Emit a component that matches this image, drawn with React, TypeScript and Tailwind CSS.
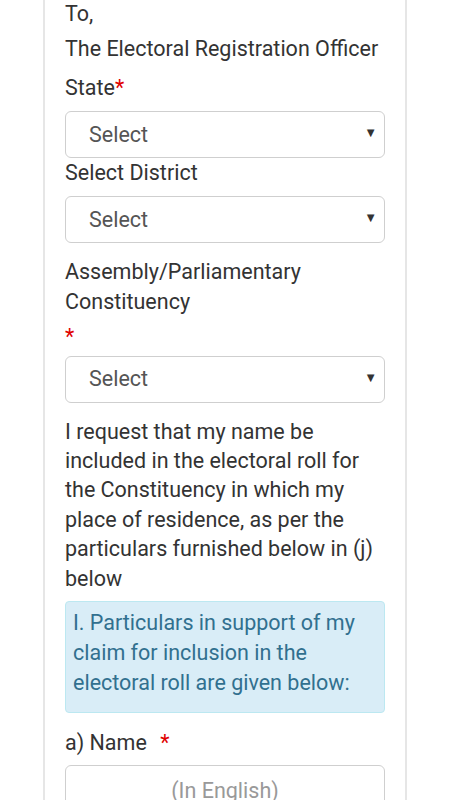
import React from "react";

function Req({ className = "" }: { className?: string }) {
  return <span className={"text-[#e00000] " + className}>*</span>;
}

function SelectBox() {
  return (
    <div className="relative flex h-[47px] w-full items-center rounded-[6px] border border-[#cfcfcf] bg-white pl-[23px] text-[#555]">
      <span>Select</span>
      <span className="absolute right-[7px] top-[14px] text-[13px] leading-none text-[#333]">▼</span>
    </div>
  );
}

export default function App() {
  return (
    <div
      className="min-h-screen bg-white text-[21.5px] leading-[29.4px] text-[#333]"
      style={{ fontFamily: "Roboto, 'Liberation Sans', sans-serif" }}
    >
      <div className="mx-[43px] -mt-[40px] flex min-h-[880px] flex-col border-x-2 border-[#e6e6e6] px-[20px] pt-[39px]">
        <div>To,</div>
        <div className="mt-[5.6px]">The Electoral Registration Officer</div>
        <div className="mt-[10px]">
          State<Req />
        </div>
        <div className="mt-[8px]">
          <SelectBox />
        </div>
        <div>Select District</div>
        <div className="mt-[8.5px]">
          <SelectBox />
        </div>
        <div className="mt-[14.6px]">Assembly/Parliamentary Constituency</div>
        <div className="mt-[6px]">
          <Req />
        </div>
        <div className="mt-[4px]">
          <SelectBox />
        </div>
        <p className="mt-[14px]">
          I request that my name be included in the electoral roll for the Constituency in which my place of
          residence, as per the particulars furnished below in (j) below
        </p>
        <div className="mt-[8px] rounded-[4px] border border-[#bce8f1] bg-[#d9edf7] px-[7px] pb-[14px] pt-[6px] text-[#31708f] leading-[30px]">
          I. Particulars in support of my claim for inclusion in the electoral roll are given below:
        </div>
        <div className="mt-[14.6px]">
          a) Name <Req className="ml-[8px]" />
        </div>
        <div className="mt-[8px] flex h-[47px] items-center justify-center rounded-[6px] border border-[#cfcfcf] pt-[4px] text-[#999]">
          (In English)
        </div>
      </div>
    </div>
  );
}
